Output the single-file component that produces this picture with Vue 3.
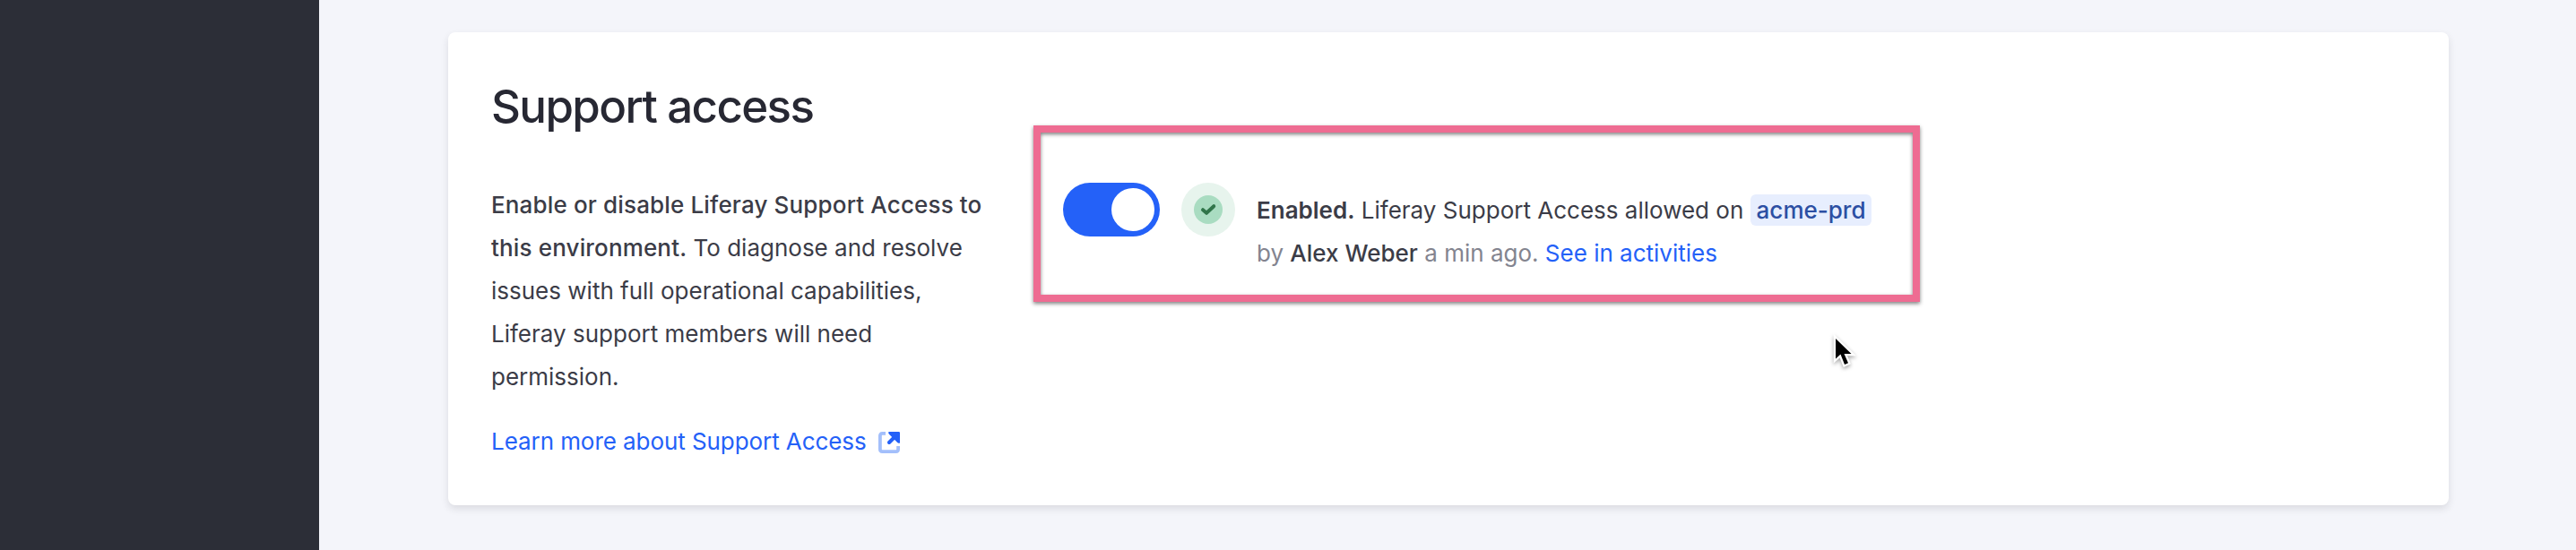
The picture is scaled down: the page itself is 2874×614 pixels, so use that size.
<script setup>
import { ref } from 'vue'

const enabled = ref(true)
const environment = 'acme-prd'
const author = 'Alex Weber'
</script>

<template>
  <div class="app">
    <aside class="sidebar"></aside>
    <main class="content">
      <section class="card">
        <div class="about">
          <h2 class="title">Support access</h2>
          <p class="description">
            <strong>Enable or disable Liferay Support Access to this environment.</strong>
            To diagnose and resolve issues with full operational capabilities, Liferay support members will need permission.
          </p>
          <a class="link learn-more">
            <span>Learn more about Support Access</span>
            <svg class="external" viewBox="0 0 24 24" aria-hidden="true">
              <path class="external-frame" d="M8 1.9H4.4Q1.9 1.9 1.9 4.4V19.6Q1.9 22.1 4.4 22.1H19.6Q22.1 22.1 22.1 19.6V16" />
              <path class="external-arrow" d="M12 12L20 4" />
              <path class="external-head" d="M11.6 0H22.8Q24 0 24 1.2V12.4Q22.4 13.2 21.2 12L12 2.8Q10.4 1 11.6 0Z" />
            </svg>
          </a>
        </div>

        <div class="status">
          <button class="toggle" :class="{ on: enabled }" role="switch" :aria-checked="enabled" aria-label="Support access">
            <span class="knob"></span>
          </button>
          <span class="badge">
            <span class="badge-core">
              <svg viewBox="0 0 32 32" aria-hidden="true">
                <path d="M10 16.2L14.1 19.8L22.2 12.2" />
              </svg>
            </span>
          </span>
          <div class="message">
            <p><strong class="state">Enabled.</strong> Liferay Support Access allowed on <span class="chip">{{ environment }}</span></p>
            <p class="muted">by <strong class="author">{{ author }}</strong> a min ago. <a class="link">See in activities</a></p>
          </div>
        </div>
      </section>
    </main>

    <svg class="cursor" viewBox="0 0 36 44" aria-hidden="true">
      <path d="M7 8V30.5L12.5 25.5L17 37L21 35.2L16.5 25H24.5Z" />
    </svg>
  </div>
</template>

<style>
body {
  background: #f4f5fa;
}
</style>

<style scoped>
.app {
  position: relative;
  display: flex;
  width: 2874px;
  height: 614px;
  overflow: hidden;
  background: #f4f5fa;
  color: #3b3c47;
  font: 400 26px/48px Inter, "Liberation Sans", sans-serif;
}

.sidebar {
  flex: none;
  width: 356px;
  background: #2c2e37;
}

.content {
  flex: 1;
  padding: 36px 142px 50px 144px;
}

.card {
  display: flex;
  gap: 45px;
  box-sizing: border-box;
  height: 528px;
  padding: 48px;
  border-radius: 8px;
  background: #fff;
  box-shadow: 0 4px 8px rgba(39, 40, 51, 0.12);
}

.about {
  flex: none;
  width: 560px;
}

.title {
  margin: -1px 0 50px;
  color: #272833;
  font-size: 51px;
  font-weight: 500;
  line-height: 72px;
  letter-spacing: -1.6px;
}

.description {
  margin: 0 0 24px;
}

.description strong {
  font-weight: 500;
  letter-spacing: 0.15px;
}

.link {
  color: #2461f8;
  text-decoration: none;
}

.learn-more {
  display: flex;
  align-items: center;
  gap: 13px;
  letter-spacing: -0.07px;
}

.external {
  display: block;
  width: 24px;
  height: 24px;
  margin-top: 2px;
}

.external path {
  fill: none;
}

.external .external-frame {
  stroke: #a3bffb;
  stroke-width: 3.8;
}

.external .external-arrow {
  stroke: #2461f8;
  stroke-width: 4;
  stroke-linecap: round;
}

.external .external-head {
  fill: #2461f8;
}

.status {
  position: relative;
  display: flex;
  align-items: flex-start;
  align-self: flex-start;
  box-sizing: border-box;
  flex: none;
  width: 989px;
  height: 197px;
  margin-top: 56px;
  padding: 64px 0 0 33px;
}

.status::after {
  content: "";
  position: absolute;
  inset: 0;
  border: 8px solid #ee6c92;
  filter: drop-shadow(0 2px 2px rgba(0, 0, 0, 0.5));
  pointer-events: none;
}

.toggle {
  flex: none;
  display: flex;
  box-sizing: border-box;
  width: 108px;
  height: 60px;
  padding: 6px;
  border: 0;
  border-radius: 30px;
  background: #cdced9;
}

.toggle.on {
  justify-content: flex-end;
  background: #2461f8;
}

.knob {
  width: 48px;
  height: 48px;
  border-radius: 50%;
  background: #fff;
}

.badge {
  flex: none;
  display: grid;
  place-items: center;
  width: 60px;
  height: 60px;
  margin-left: 24px;
  border-radius: 50%;
  background: #e7f4ed;
}

.badge-core {
  width: 32px;
  height: 32px;
  border-radius: 50%;
  background: #a9dcc1;
}

.badge-core svg {
  display: block;
}

.badge-core path {
  fill: none;
  stroke: #2f7549;
  stroke-width: 4;
  stroke-linecap: round;
  stroke-linejoin: round;
}

.message {
  margin: 7px 0 0 24px;
}

.message p {
  margin: 0;
  white-space: nowrap;
}

.state {
  font-weight: 600;
}

.muted {
  color: #83848f;
}

.author {
  color: #3b3c47;
  font-weight: 500;
}

.chip {
  padding: 2px 7px;
  border-radius: 6px;
  background: #e7eefe;
  color: #2c4fa3;
  font-weight: 500;
}

.cursor {
  position: absolute;
  left: 2041px;
  top: 370px;
  width: 36px;
  height: 44px;
  overflow: visible;
  filter: drop-shadow(0 2px 2px rgba(0, 0, 0, 0.35));
}

.cursor path {
  fill: #000;
  stroke: #fff;
  stroke-width: 4.5;
  paint-order: stroke;
}
</style>
